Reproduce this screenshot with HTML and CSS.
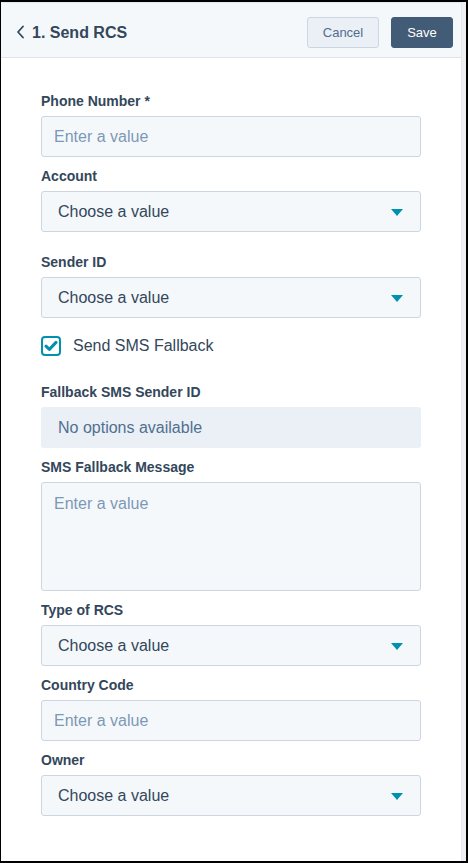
FILE: index.html
```html
<!DOCTYPE html>
<html lang="en">
<head>
<meta charset="utf-8">
<title>1. Send RCS</title>
<link rel="stylesheet" href="styles.css">
</head>
<body>
<div class="frame">
  <div class="panel">
    <header class="header">
      <div class="title">
        <svg class="back" width="9" height="14" viewBox="0 0 9 14" aria-hidden="true"><path d="M7 1.5 L2 7 L7 12.5" fill="none" stroke="#33475b" stroke-width="1.8" stroke-linecap="round" stroke-linejoin="round"/></svg>
        <span>1. Send RCS</span>
      </div>
      <div class="actions">
        <button class="btn btn-secondary">Cancel</button>
        <button class="btn btn-primary">Save</button>
      </div>
    </header>
    <main class="form">
      <div class="field">
        <label class="label">Phone Number *</label>
        <div class="input placeholder">Enter a value</div>
      </div>
      <div class="field field-wide">
        <label class="label">Account</label>
        <div class="select"><span>Choose a value</span><span class="caret"></span></div>
      </div>
      <div class="field field-none">
        <label class="label">Sender ID</label>
        <div class="select"><span>Choose a value</span><span class="caret"></span></div>
      </div>
      <div class="check-row">
        <span class="checkbox">
          <svg width="14" height="12" viewBox="0 0 14 12" aria-hidden="true"><path d="M2 6.2 L5.4 9.4 L12 2.4" fill="none" stroke="#0091ae" stroke-width="3" stroke-linecap="round" stroke-linejoin="round"/></svg>
        </span>
        <span class="check-label">Send SMS Fallback</span>
      </div>
      <div class="field">
        <label class="label">Fallback SMS Sender ID</label>
        <div class="disabled">No options available</div>
      </div>
      <div class="field">
        <label class="label">SMS Fallback Message</label>
        <div class="textarea placeholder">Enter a value</div>
      </div>
      <div class="field">
        <label class="label">Type of RCS</label>
        <div class="select"><span>Choose a value</span><span class="caret"></span></div>
      </div>
      <div class="field">
        <label class="label">Country Code</label>
        <div class="input placeholder">Enter a value</div>
      </div>
      <div class="field">
        <label class="label">Owner</label>
        <div class="select"><span>Choose a value</span><span class="caret"></span></div>
      </div>
    </main>
  </div>
  <div class="scrollbar"></div>
</div>
</body>
</html>
```
FILE: styles.css
```css
* { box-sizing: border-box; }
html, body { margin: 0; padding: 0; background: #fff; }
body {
  font-family: "Liberation Sans", Arial, sans-serif;
  color: #33475b;
}
.frame {
  width: 468px;
  height: 863px;
  border-style: solid;
  border-color: #000;
  border-width: 2px 2px 2px 1px;
  display: flex;
  overflow: hidden;
}
.panel {
  width: 460px;
  display: flex;
  flex-direction: column;
}
.scrollbar {
  width: 5px;
  background: #eef0f3;
  border-left: 1px solid #e6e9ed;
}
.header {
  background: #f5f8fa;
  border-top: 1px solid #e3e8ee;
  border-bottom: 1px solid #dfe3eb;
  height: 56px;
  padding: 14px 8px 0 15px;
  display: flex;
  justify-content: space-between;
  align-items: flex-start;
  flex-shrink: 0;
}
.title {
  display: flex;
  align-items: center;
  height: 31px;
  font-size: 16px;
  font-weight: bold;
  color: #33475b;
}
.back { margin-right: 7px; margin-top: -2px; }
.actions { display: flex; gap: 12px; }
.btn {
  height: 31px;
  border-radius: 3px;
  font-family: "Liberation Sans", Arial, sans-serif;
  font-size: 13px;
  padding: 0;
  cursor: pointer;
}
.btn-secondary {
  width: 72px;
  background: #eaf0f6;
  border: 1px solid #cbd6e2;
  color: #506e91;
}
.btn-primary {
  width: 62px;
  background: #425b76;
  border: 1px solid #425b76;
  color: #fff;
}
.form {
  padding: 33px 40px 0 40px;
  display: flex;
  flex-direction: column;
}
.field { display: flex; flex-direction: column; margin-bottom: 9px; }
.field-wide { margin-bottom: 20px; }
.field-none { margin-bottom: 0; }
.label {
  font-size: 14px;
  font-weight: bold;
  line-height: 20px;
  margin-bottom: 5px;
  color: #33475b;
}
.input, .select, .textarea, .disabled {
  width: 380px;
  font-size: 16px;
  border-radius: 3px;
  flex-shrink: 0;
}
.input {
  height: 41px;
  background: #f5f8fa;
  border: 1px solid #cbd6e2;
  padding: 0 12px;
  display: flex;
  align-items: center;
}
.placeholder { color: #7c98b6; }
.select {
  height: 41px;
  background: #f5f8fa;
  border: 1px solid #cbd6e2;
  padding: 0 17px 0 16px;
  display: flex;
  align-items: center;
  justify-content: space-between;
  color: #33475b;
}
.caret {
  width: 0;
  height: 0;
  border-left: 6px solid transparent;
  border-right: 6px solid transparent;
  border-top: 7px solid #0091ae;
  margin-top: 1px;
}
.disabled {
  height: 41px;
  background: #eaf0f6;
  padding: 0 17px;
  display: flex;
  align-items: center;
  color: #516f90;
}
.textarea {
  height: 109px;
  background: #f5f8fa;
  border: 1px solid #cbd6e2;
  padding: 11px 12px;
  line-height: 20px;
}
.check-row {
  display: flex;
  align-items: center;
  margin: 18px 0 26px 0;
  height: 20px;
  flex-shrink: 0;
}
.checkbox {
  width: 20px;
  height: 20px;
  border: 2px solid #0091ae;
  border-radius: 4px;
  background: #fff;
  display: flex;
  align-items: center;
  justify-content: center;
  margin-right: 12px;
}
.check-label { font-size: 16px; color: #33475b; }
```
